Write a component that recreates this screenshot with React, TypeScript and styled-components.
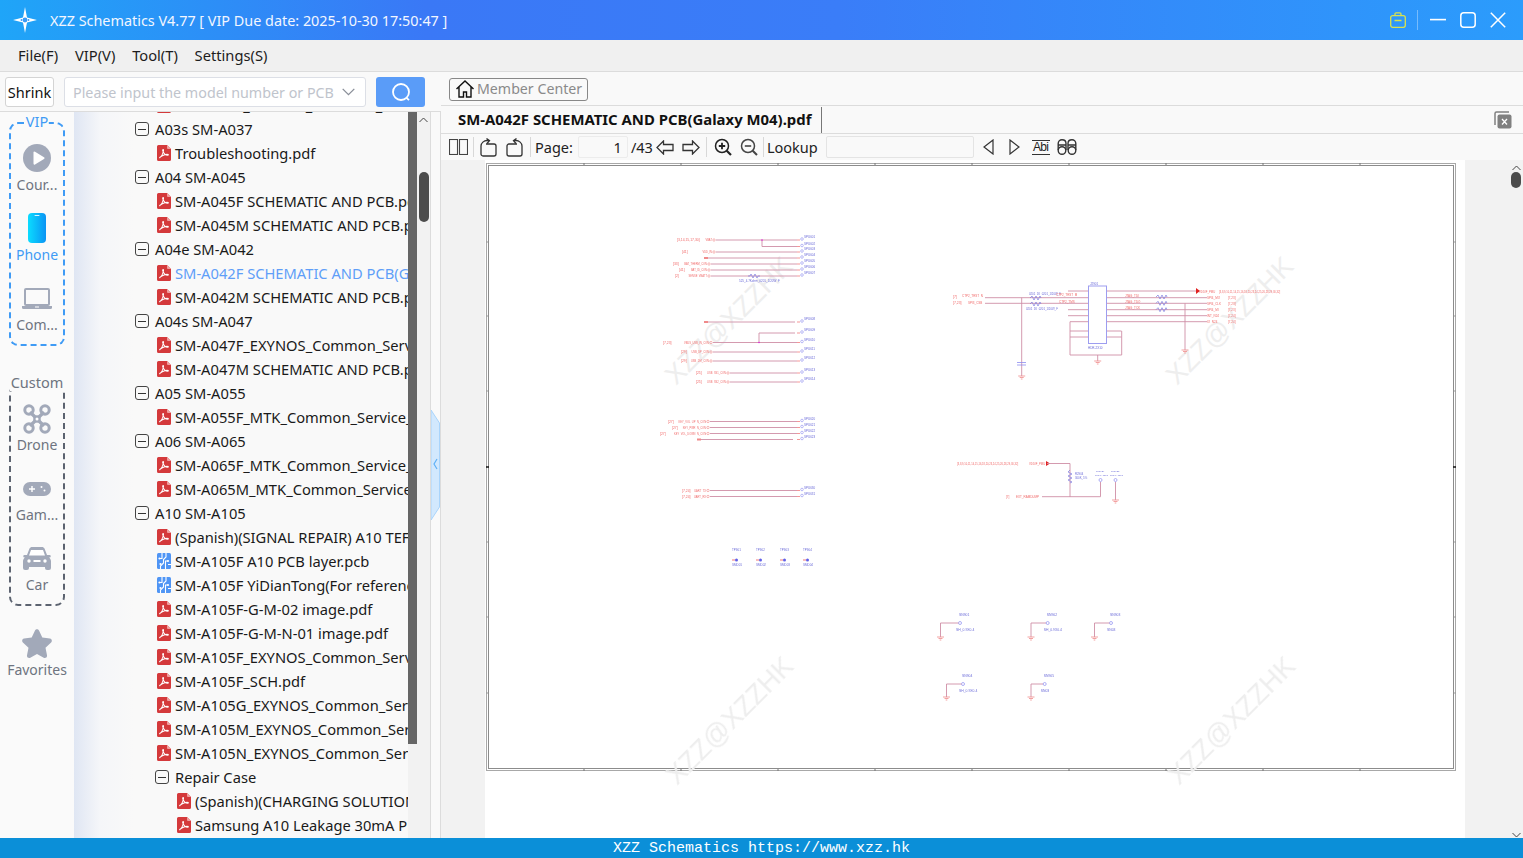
import React from 'react';
import styled, { createGlobalStyle } from 'styled-components';

const GlobalStyle = createGlobalStyle`
  html, body {
    margin: 0;
    padding: 0;
    overflow: hidden;
    font-family: "Noto Sans", "Open Sans", sans-serif;
  }
`;

const ICON_GREY = '#a2a9b9';

const Page = styled.div`
  width: 1523px;
  height: 858px;
  display: flex;
  flex-direction: column;
  overflow: hidden;
  background: #f2f2f2;
`;

const TitleBar = styled.div`
  height: 40px;
  flex: none;
  display: flex;
  align-items: center;
  padding: 0 17px 0 13px;
  color: #fff;
  background: linear-gradient(90deg, #1fa5f8 0, #3a78f6 28%, #3a7df8 55%, #2b9cfc 100%);
`;

const TitleText = styled.span`
  margin-left: 13px;
  font-size: 14.4px;
  flex: 1;
  color: #f2f6ff;
`;

const WindowButton = styled.svg<{ $ml?: number }>`
  display: block;
  margin-left: ${(p) => (p.$ml === undefined ? 14 : p.$ml)}px;
`;

const TitleDivider = styled.div`
  width: 1px;
  height: 20px;
  margin-left: 11px;
  background: rgba(255, 255, 255, 0.35);
`;

const MenuBar = styled.div`
  height: 32px;
  flex: none;
  display: flex;
  align-items: center;
  gap: 16.8px;
  padding: 0 0 1px 18px;
  font-size: 14.7px;
  color: #1c1c1c;
  background: #f0f0f0;
  border-bottom: 1px solid #dcdcdc;
  box-sizing: border-box;
`;

const Main = styled.div`
  flex: 1;
  min-height: 0;
  display: flex;
`;

const LeftPane = styled.div`
  width: 441px;
  flex: none;
  display: flex;
  flex-direction: column;
`;

const SearchRow = styled.div`
  height: 40px;
  flex: none;
  box-sizing: border-box;
  display: flex;
  align-items: flex-start;
  padding: 5px 0 0 5px;
  background: #f9f9f9;
  border-bottom: 1px solid #dcdcdc;
`;

const ShrinkButton = styled.div`
  width: 49px;
  height: 30px;
  box-sizing: border-box;
  border: 1px solid #d4d4d4;
  border-radius: 3px;
  background: #fff;
  font-size: 14.5px;
  line-height: 28px;
  text-align: center;
  color: #111;
`;

const SearchInput = styled.div`
  width: 302px;
  height: 30px;
  margin-left: 10px;
  padding: 0 10px 0 8px;
  box-sizing: border-box;
  display: flex;
  align-items: center;
  justify-content: space-between;
  border: 1px solid #dcdfe6;
  border-radius: 3px;
  background: #fff;
  font-size: 14.3px;
  color: #c0c4cc;
`;

const SearchButton = styled.div`
  width: 49px;
  height: 30px;
  margin-left: 10px;
  display: flex;
  align-items: center;
  justify-content: center;
  border-radius: 3px;
  background: #5a9cf8;
`;

const LeftBody = styled.div`
  flex: 1;
  min-height: 0;
  display: flex;
`;

const Sidebar = styled.div`
  width: 74px;
  flex: none;
  box-sizing: border-box;
  padding: 10px 9px 0;
  display: flex;
  flex-direction: column;
  background: #fafafa;
`;

const Group = styled.div<{ $color: string; $mt?: number; $pt: number; $pb: number; $gap: number }>`
  position: relative;
  width: 56px;
  box-sizing: border-box;
  margin-top: ${(p) => p.$mt || 0}px;
  padding: ${(p) => p.$pt}px 0 ${(p) => p.$pb}px;
  display: flex;
  flex-direction: column;
  align-items: center;
  gap: ${(p) => p.$gap}px;
  border: 2px dashed ${(p) => p.$color};
  border-radius: 9px;
`;

const GroupLabel = styled.span<{ $color: string; $top: number }>`
  position: absolute;
  top: ${(p) => p.$top}px;
  left: 50%;
  transform: translateX(-50%);
  padding: 0 1px;
  background: #fafafa;
  font-size: 14.5px;
  line-height: 18px;
  color: ${(p) => p.$color};
`;

const NavItem = styled.div<{ $active?: boolean; $lh?: number }>`
  display: flex;
  flex-direction: column;
  align-items: center;
  width: 100%;
  font-size: 14px;
  line-height: ${(p) => p.$lh || 22}px;
  white-space: nowrap;
  color: ${(p) => (p.$active ? '#3f9bf5' : '#6e7480')};
`;

const NavIcon = styled.div`
  height: 30px;
  display: flex;
  align-items: center;
  justify-content: center;
`;

const FavoriteWrap = styled.div`
  margin-top: 23px;
`;

const Tree = styled.div`
  width: 334px;
  flex: none;
  overflow: hidden;
  background: linear-gradient(90deg, #dfe6f3 0, #f5f6f9 26px, #f9f9f9 60px);
`;

const TreeList = styled.div`
  margin-top: -19px;
`;

const Row = styled.div<{ $indent: number; $selected?: boolean }>`
  height: 24px;
  display: flex;
  align-items: center;
  padding-left: ${(p) => p.$indent}px;
  font-size: 14.7px;
  white-space: nowrap;
  color: ${(p) => (p.$selected ? '#5f9ef8' : '#1a1a1a')};
`;

const Collapse = styled.span`
  width: 14px;
  height: 14px;
  flex: none;
  box-sizing: border-box;
  margin-right: 6px;
  display: flex;
  align-items: center;
  justify-content: center;
  border: 1px solid #444;
  border-radius: 3px;
  &::before {
    content: '';
    width: 8px;
    height: 1px;
    background: #333;
  }
`;

const FileGlyph = styled.svg`
  flex: none;
  margin-right: 4px;
`;

const DarkBar = styled.div`
  width: 9px;
  height: 632px;
  flex: none;
  background: #666;
`;

const ScrollTrack = styled.div`
  width: 13px;
  flex: none;
  position: relative;
  background: #f2f2f2;
`;

const ScrollArrow = styled.svg<{ $top: number; $left?: number }>`
  position: absolute;
  top: ${(p) => p.$top}px;
  left: ${(p) => (p.$left === undefined ? 2 : p.$left)}px;
`;

const ScrollThumb = styled.div<{ $top: number; $height: number; $left?: number }>`
  position: absolute;
  top: ${(p) => p.$top}px;
  left: ${(p) => (p.$left === undefined ? 2 : p.$left)}px;
  width: 10px;
  height: ${(p) => p.$height}px;
  border-radius: 5px;
  background: #4c4c4c;
`;

const Splitter = styled.div`
  width: 11px;
  flex: none;
  box-sizing: border-box;
  position: relative;
  background: #f9f9f9;
  border-left: 1px solid #dcdcdc;
  border-right: 1px solid #dcdcdc;
`;

const SplitterHandle = styled.svg`
  position: absolute;
  top: 298px;
  left: 0;
`;

const RightPane = styled.div`
  flex: 1;
  min-width: 0;
  display: flex;
  flex-direction: column;
`;

const MemberRow = styled.div`
  height: 34px;
  flex: none;
  box-sizing: border-box;
  padding: 6px 0 0 8px;
  background: #f9f9f9;
  border-bottom: 1px solid #dcdcdc;
`;

const MemberButton = styled.div`
  width: 139px;
  height: 23px;
  box-sizing: border-box;
  display: flex;
  align-items: center;
  gap: 2px;
  padding: 0 0 2px 5px;
  border: 1px solid #888;
  border-radius: 3px;
  font-size: 14.2px;
  color: #8a8a8a;
`;

const TabRow = styled.div`
  height: 28px;
  flex: none;
  box-sizing: border-box;
  display: flex;
  align-items: center;
  padding: 0 11px 0 17px;
  background: #f9f9f9;
  border-bottom: 1px solid #dcdcdc;
`;

const TabTitle = styled.span`
  padding-right: 10px;
  height: 26px;
  line-height: 24px;
  font-size: 14.9px;
  font-weight: 700;
  color: #111;
  border-right: 1px solid #777;
`;

const TabClose = styled.svg`
  margin-left: auto;
`;

const Toolbar = styled.div`
  height: 26px;
  flex: none;
  display: flex;
  align-items: center;
  padding-left: 8px;
  font-size: 14.5px;
  color: #222;
  background: #f9f9f9;
`;

const ToolIcon = styled.svg<{ $ml?: number }>`
  flex: none;
  display: block;
  margin-left: ${(p) => p.$ml || 0}px;
`;

const ToolDivider = styled.div<{ $ml: number }>`
  width: 1px;
  height: 20px;
  flex: none;
  margin-left: ${(p) => p.$ml}px;
  background: #d8d8d8;
`;

const ToolText = styled.span<{ $ml?: number }>`
  flex: none;
  margin-left: ${(p) => p.$ml || 0}px;
`;

const PageInput = styled.div`
  width: 50px;
  height: 22px;
  flex: none;
  box-sizing: border-box;
  margin-left: 5px;
  padding-right: 5px;
  text-align: right;
  line-height: 20px;
  border: 1px solid #ececec;
  border-radius: 2px;
  background: #f9f9f9;
`;

const LookupInput = styled.div`
  width: 148px;
  height: 22px;
  flex: none;
  box-sizing: border-box;
  margin-left: 8px;
  border: 1px solid #e4e4e4;
  border-radius: 2px;
  background: #f9f9f9;
`;

const AbiMark = styled.span`
  flex: none;
  margin-left: 12px;
  width: 18px;
  font-family: "Liberation Sans", sans-serif;
  font-size: 12px;
  letter-spacing: -0.7px;
  line-height: 13px;
  text-align: center;
  color: #222;
  border-top: 1px solid #333;
  border-bottom: 1px solid #333;
`;

const Viewer = styled.div`
  flex: 1;
  min-height: 0;
  position: relative;
  display: flex;
  padding-left: 44px;
  background: #f2f2f2;
`;

const Sheet = styled.div`
  width: 980px;
  height: 100%;
  flex: none;
  background: #fff;
  overflow: hidden;
`;

const SchematicSvg = styled.svg`
  display: block;
  filter: blur(0.35px);
`;

const Footer = styled.div`
  height: 20px;
  flex: none;
  background: #0b8fd8;
  color: #fff;
  text-align: center;
  font-family: "Liberation Mono", monospace;
  font-size: 15px;
  line-height: 22px;
  white-space: pre;
`;

type TreeEntry = { level: number; kind: 'group' | 'pdf' | 'pcb'; text: string; selected?: boolean };

const TREE: TreeEntry[] = [
  { level: 0, kind: 'pdf', text: 'SM-A037F_EXYNOS_Common_Service_Manual.pdf' },
  { level: 0, kind: 'group', text: 'A03s SM-A037' },
  { level: 0, kind: 'pdf', text: 'Troubleshooting.pdf' },
  { level: 0, kind: 'group', text: 'A04 SM-A045' },
  { level: 0, kind: 'pdf', text: 'SM-A045F SCHEMATIC AND PCB.pdf' },
  { level: 0, kind: 'pdf', text: 'SM-A045M SCHEMATIC AND PCB.pdf' },
  { level: 0, kind: 'group', text: 'A04e SM-A042' },
  { level: 0, kind: 'pdf', text: 'SM-A042F SCHEMATIC AND PCB(Galaxy M04).pdf', selected: true },
  { level: 0, kind: 'pdf', text: 'SM-A042M SCHEMATIC AND PCB.pdf' },
  { level: 0, kind: 'group', text: 'A04s SM-A047' },
  { level: 0, kind: 'pdf', text: 'SM-A047F_EXYNOS_Common_Service_Manual.pdf' },
  { level: 0, kind: 'pdf', text: 'SM-A047M SCHEMATIC AND PCB.pdf' },
  { level: 0, kind: 'group', text: 'A05 SM-A055' },
  { level: 0, kind: 'pdf', text: 'SM-A055F_MTK_Common_Service_Manual.pdf' },
  { level: 0, kind: 'group', text: 'A06 SM-A065' },
  { level: 0, kind: 'pdf', text: 'SM-A065F_MTK_Common_Service_Manual.pdf' },
  { level: 0, kind: 'pdf', text: 'SM-A065M_MTK_Common_Service_Manual.pdf' },
  { level: 0, kind: 'group', text: 'A10 SM-A105' },
  { level: 0, kind: 'pdf', text: '(Spanish)(SIGNAL REPAIR) A10 TEF.pdf' },
  { level: 0, kind: 'pcb', text: 'SM-A105F A10 PCB layer.pcb' },
  { level: 0, kind: 'pcb', text: 'SM-A105F YiDianTong(For reference).pcb' },
  { level: 0, kind: 'pdf', text: 'SM-A105F-G-M-02 image.pdf' },
  { level: 0, kind: 'pdf', text: 'SM-A105F-G-M-N-01 image.pdf' },
  { level: 0, kind: 'pdf', text: 'SM-A105F_EXYNOS_Common_Service_Manual.pdf' },
  { level: 0, kind: 'pdf', text: 'SM-A105F_SCH.pdf' },
  { level: 0, kind: 'pdf', text: 'SM-A105G_EXYNOS_Common_Service_Manual.pdf' },
  { level: 0, kind: 'pdf', text: 'SM-A105M_EXYNOS_Common_Service_Manual.pdf' },
  { level: 0, kind: 'pdf', text: 'SM-A105N_EXYNOS_Common_Service_Manual.pdf' },
  { level: 1, kind: 'group', text: 'Repair Case' },
  { level: 1, kind: 'pdf', text: '(Spanish)(CHARGING SOLUTION).pdf' },
  { level: 1, kind: 'pdf', text: 'Samsung A10 Leakage 30mA Problem.pdf' },
];

const PdfIcon = () => (
  <FileGlyph width="14" height="16" viewBox="0 0 14 16">
    <path d="M2 0h8l4 4v10.500a1.500 1.500 0 0 1-1.500 1.500h-11A1.500 1.500 0 0 1 0 14.500v-13A1.500 1.500 0 0 1 1.500 0z" fill="#d4393b" />
    <path d="M10 0l4 4h-3a1 1 0 0 1-1-1z" fill="#f0a0a0" />
    <path d="M2.800 12.600c1.600-1 3-3.600 3.600-6.600.2-1 .1-1.500-.3-1.500s-.5.7-.2 1.600c.7 2 2.600 4 4.800 4.200.7 0 .9-.4.5-.7-1.200-.7-5.300.1-8 2.600-.6.6-.7.8-.4.4z" fill="none" stroke="#fff" strokeWidth="1.100" />
  </FileGlyph>
);

const PcbIcon = () => (
  <FileGlyph width="14" height="16" viewBox="0 0 14 16">
    <rect width="14" height="16" rx="1.500" fill="#4f95f5" />
    <path d="M5 0v5.500H2.500M9 0v4L6.500 6.500V10L3.500 13v3M11 8H8.500V16M14 11.500h-3" fill="none" stroke="#fff" strokeWidth="1.100" />
    <circle cx="2.500" cy="5.500" r="1.100" fill="#fff" />
    <circle cx="11" cy="8" r="1.100" fill="#fff" />
    <circle cx="3.500" cy="11" r="1.100" fill="#fff" />
  </FileGlyph>
);

const TitleBarIcons = () => (
  <>
    <WindowButton width="16" height="16" viewBox="0 0 16 16" fill="none" stroke="#d9e24e" strokeWidth="1.300">
      <rect x="0.700" y="3.700" width="14.600" height="11.600" rx="2" />
      <path d="M5 3.500V2a1.200 1.200 0 0 1 1.200-1.200h3.600A1.200 1.200 0 0 1 11 2v1.500M4.500 8.500h7" />
    </WindowButton>
    <TitleDivider />
    <WindowButton $ml={12} width="16" height="16" viewBox="0 0 16 16" fill="#fff">
      <rect y="6.800" width="16" height="1.600" />
    </WindowButton>
    <WindowButton width="16" height="16" viewBox="0 0 16 16" fill="none" stroke="#fff" strokeWidth="1.500">
      <rect x="0.800" y="0.800" width="14.400" height="14.400" rx="3" />
    </WindowButton>
    <WindowButton width="16" height="16" viewBox="0 0 16 16" fill="none" stroke="#fff" strokeWidth="1.500">
      <path d="M.8.800l14.400 14.400M15.200.800L.8 15.200" />
    </WindowButton>
  </>
);

const Wire = ({ d }: { d: string }) => <path d={d} fill="none" stroke="#cf8ea6" strokeWidth="0.900" />;

const Ground = ({ x, y }: { x: number; y: number }) => (
  <path d={`M${x - 3.500} ${y}h7M${x - 2} ${y + 1.500}h4M${x - 0.800} ${y + 3}h1.600`} stroke="#f08a8a" strokeWidth="0.800" fill="none" />
);

type SchTextProps = { x: number; y: number; children: React.ReactNode; blue?: boolean; size?: number; end?: boolean };

const SchText = ({ x, y, children, blue, size = 3.400, end }: SchTextProps) => (
  <text
    x={x}
    y={y}
    fontSize={size}
    textAnchor={end ? 'end' : 'start'}
    fontFamily="Liberation Sans, sans-serif"
    fill={blue ? '#6a6ad8' : '#f06a6a'}
  >
    {children}
  </text>
);

const TestPoint = ({ x, y, label, sub }: { x: number; y: number; label: string; sub: string }) => (
  <g>
    <circle cx={x} cy={y} r="1.500" fill="none" stroke="#8d8df0" strokeWidth="0.700" />
    <SchText x={x - 1} y={y - 7} blue>{label}</SchText>
    <SchText x={x - 4} y={y + 8} blue>{sub}</SchText>
  </g>
);

// ref sheet, ref x, net name, wire start, y, pin name
const CONNECTOR_ROWS: [string, number, string, number, number, string][] = [
  ['[3,14,15,17,30]', 677, 'VBAT', 716, 240, 'SPU601'],
  ['[41]', 682, 'VDD_IN', 716, 252, 'SPU603'],
  ['[33]', 673, 'BAT_THERM_CON', 711, 264, 'SPU605'],
  ['[41]', 679, 'BAT_ID_CON', 711, 270, 'SPU606'],
  ['[2]', 675, 'SENSE_VBATT', 711, 276, 'SPU607'],
  ['[7,23]', 663, 'VBUS_USB_IN_CON', 713, 342.500, 'SPU610'],
  ['[29]', 681, 'USB_DP_CON', 713, 352, 'SPU611'],
  ['[29]', 681, 'USB_DM_CON', 713, 361, 'SPU612'],
  ['[25]', 696, 'USB_SS1_CON', 730, 373, 'SPU613'],
  ['[25]', 696, 'USB_SS2_CON', 730, 382, 'SPU614'],
  ['[27]', 668, 'KEY_VOL_UP_N_CON', 710, 421.500, 'SPU620'],
  ['[27]', 672, 'KEY_PWR_N_CON', 710, 427.500, 'SPU621'],
  ['[27]', 660, 'KEY_VOL_DOWN_N_CON', 710, 433.500, 'SPU622'],
  ['[7,24]', 682, 'UART_TX', 710, 490.500, 'SPU630'],
  ['[7,24]', 682, 'UART_RX', 710, 496.500, 'SPU631'],
];

// pins that carry no net label of their own
const BARE_PINS: [number, string][] = [
  [246.500, 'SPU602'],
  [258, 'SPU604'],
  [322, 'SPU608'],
  [333, 'SPU609'],
  [439.500, 'SPU623'],
];

const Schematic = () => (
  <SchematicSvg width="980" height="678" viewBox="485 160 980 678">
    {/* page frame with its zone ticks */}
    <rect x="486.500" y="163.500" width="969" height="607" fill="#fff" stroke="#a8a8a8" />
    <rect x="488.500" y="165.500" width="965" height="603" fill="none" stroke="#8c8c8c" />
    {[584, 681, 778, 875, 972, 1069, 1166, 1263, 1360].map((x) => (
      <path key={x} d={`M${x} 163v2M${x} 769v2`} stroke="#777" />
    ))}
    {[242, 316, 391, 542, 617, 693].map((y) => (
      <path key={y} d={`M486 ${y}h2M1454 ${y}h2`} stroke="#999" />
    ))}
    <path d="M486 467h3M1453 467h3" stroke="#111" strokeWidth="1.500" />

    {/* watermarks */}
    {[[728, 320], [1229, 320], [729, 720], [1231, 720]].map(([x, y]) => (
      <text
        key={`${x}-${y}`}
        x={x}
        y={y + 10}
        textAnchor="middle"
        fontSize="27"
        fontFamily="Liberation Sans, sans-serif"
        fill="#eeeeee"
        transform={`rotate(-45 ${x} ${y})`}
      >
        XZZ@XZZHK
      </text>
    ))}

    {/* left connector blocks */}
    {CONNECTOR_ROWS.map(([ref, refX, name, x, y, pin]) => (
      <g key={pin}>
        <Wire d={`M${x} ${y}H797`} />
        <circle cx={x - 2} cy={y} r="1.200" fill="none" stroke="#f08a8a" strokeWidth="0.600" />
        <SchText x={refX} y={y + 1}>{ref}</SchText>
        <SchText x={x - 4} y={y + 1} end size={2.600}>{name}</SchText>
        <circle cx="802" cy={y - 1} r="1.300" fill="none" stroke="#8d8df0" strokeWidth="0.600" />
        <path d={`M797 ${y}h3`} stroke="#f06a6a" strokeWidth="0.700" />
        <SchText x={804} y={y - 2} blue size={3}>{pin}</SchText>
      </g>
    ))}
    {BARE_PINS.map(([y, pin]) => (
      <g key={pin}>
        <circle cx="802" cy={y - 1} r="1.300" fill="none" stroke="#8d8df0" strokeWidth="0.600" />
        <path d={`M797 ${y}h3`} stroke="#f06a6a" strokeWidth="0.700" />
        <SchText x={804} y={y - 2} blue size={3}>{pin}</SchText>
      </g>
    ))}
    <Wire d="M762 240v6.500H797M708 258H797M708 322H795M759 342.500V333H795M701 439.500H793" />
    <circle cx="762" cy="240" r="0.800" fill="#e020e0" />
    <circle cx="759" cy="342.500" r="0.800" fill="#e020e0" />
    <path d="M748 276h2l1-2 2 4 2-4 2 4 1-2h2" fill="none" stroke="#7a7ae0" strokeWidth="0.700" />
    <SchText x={739} y={282} blue size={3}>525_4.7Kohm_0201_1/20W_F</SchText>
    <path d="M704 258h4M704 322h4M697 439.500h4" stroke="#f08a8a" strokeWidth="2" />

    {/* test points under the connectors */}
    {[735, 759, 783, 806].map((x, i) => (
      <g key={x}>
        <SchText x={x - 3} y={551} blue size={3}>{`TP90${i + 1}`}</SchText>
        <path d={`M${x - 3} 560h3`} stroke="#f06a6a" strokeWidth="0.900" />
        <circle cx={x + 1.500} cy="560" r="1.500" fill="#6060e8" />
        <SchText x={x - 3} y={566} blue size={3}>{`SMD0${i + 1}`}</SchText>
      </g>
    ))}

    {/* connector ic block */}
    <rect x="1088.500" y="286" width="18" height="57.500" fill="#fff" stroke="#9d9df0" />
    <Wire d="M985 297.700H1088M985 303.300H1088M1107 291H1196M1107 297.700H1207M1107 303.300H1207M1107 309.700H1207M1107 315.700H1207M1107 321.700H1207" />
    <Wire d="M1068 291h20M1068 309.700h20M1068 315.700h20M1070 321.700h18M1070 331h18M1070 337h18M1107 331h14.500M1107 337h14.500" />
    <Wire d="M1070 321.700V355H1121.700V331M1097.700 355v6M1021.700 297.700V376M1185 303.300V350" />
    <path d="M1196 288l4 3-4 3z" fill="#e02020" />
    <path d="M1017 362.500h9M1017 365h9" stroke="#8d8df0" strokeWidth="0.800" />
    <path d="M1030 298l2-2 2 4 2-4 2 4 2-4 1 2M1030 304l2-2 2 4 2-4 2 4 2-4 1 2M1156 297l2-2 2 4 2-4 2 4 2-4 1 2M1156 303.300l2-2 2 4 2-4 2 4 2-4 1 2M1156 309.700l2-2 2 4 2-4 2 4 2-4 1 2" fill="none" stroke="#7a7ae0" strokeWidth="0.700" />
    <Ground x={1097.700} y={361} />
    <Ground x={1021.700} y={376} />
    <Ground x={1185} y={350} />
    <SchText x={953} y={298}>[7]</SchText>
    <SchText x={962} y={297} size={3}>CTP2_TRST_N</SchText>
    <SchText x={953} y={304}>[7,23]</SchText>
    <SchText x={968} y={304} size={3}>SPI3_CSB</SchText>
    <SchText x={1029} y={295} blue size={2.800}>0201_1K_0201_1/20W_F</SchText>
    <SchText x={1026} y={310} blue size={2.800}>0201_1K_0201_1/20W_F</SchText>
    <SchText x={1056} y={296} size={3}>CTP2_TRST_M</SchText>
    <SchText x={1059} y={303} size={3}>CTP2_TMS</SchText>
    <SchText x={1125} y={297} size={3}>JTAG_TDI</SchText>
    <SchText x={1125} y={303} size={3}>JTAG_TDO</SchText>
    <SchText x={1125} y={309} size={3}>JTAG_TCK</SchText>
    <SchText x={1199} y={293} size={2.800}>VDDIF_PMU</SchText>
    <SchText x={1219} y={293} size={2.600}>[3,8,9,10,11,14,15,16,18,20,23,24,25,26,28,29,30,32]</SchText>
    <SchText x={1207} y={299} size={3}>SPI4_MO</SchText>
    <SchText x={1207} y={305} size={3}>SPI4_CLK</SchText>
    <SchText x={1207} y={311} size={3}>SPI4_MI</SchText>
    <SchText x={1207} y={317} size={3}>INT_N24</SchText>
    <SchText x={1207} y={323} size={3}>IO_N24</SchText>
    <SchText x={1228} y={299} size={3}>[7,23]</SchText>
    <SchText x={1228} y={305} size={3}>[7,23]</SchText>
    <SchText x={1228} y={311} size={3}>[7,23]</SchText>
    <SchText x={1228} y={317} size={3}>[7,24]</SchText>
    <SchText x={1228} y={323} size={3}>[7,24]</SchText>
    <SchText x={1090} y={285} blue size={3}>J2901</SchText>
    <SchText x={1088} y={349} blue size={3}>HDR-2X10</SchText>

    {/* interrupt pullup */}
    <path d="M1046 461l4 2.500-4 2.500z" fill="#e02020" />
    <Wire d="M1047 463.500H1070V497M1042 496.700H1100.500V482M1115.500 482V500" />
    <path d="M1070 470l-2 2 4 2-4 2 4 2-4 2 4 2-2 1" fill="none" stroke="#7a7ae0" strokeWidth="0.700" />
    <circle cx="1100.500" cy="480" r="1.500" fill="none" stroke="#8d8df0" strokeWidth="0.700" />
    <circle cx="1115.500" cy="480" r="1.500" fill="none" stroke="#8d8df0" strokeWidth="0.700" />
    <Ground x={1115.500} y={500} />
    <SchText x={957} y={465} size={2.600}>[3,8,9,10,11,14,15,16,18,20,23,24,25,26,28,29,30,32]</SchText>
    <SchText x={1029} y={465} size={2.800}>VDDIF_PMU</SchText>
    <SchText x={1006} y={498} size={3}>[7]</SchText>
    <SchText x={1016} y={498} size={3}>EXT_RAMDUMP</SchText>
    <SchText x={1075} y={475} blue size={2.800}>R2904</SchText>
    <SchText x={1075} y={479} blue size={2.800}>300K_5%</SchText>
    <SchText x={1096} y={472} blue size={2.400}>TP2924</SchText>
    <SchText x={1095} y={475.500} blue size={2.400}>TP3.0_0201</SchText>
    <SchText x={1111} y={472} blue size={2.400}>TP2925</SchText>
    <SchText x={1110} y={475.500} blue size={2.400}>TP3.0_0201</SchText>

    {/* shield clips */}
    <TestPoint x={960} y={623} label="SN901" sub="SH_0.9X0.4" />
    <TestPoint x={1047.700} y={623} label="SN902" sub="SH_0.9X0.4" />
    <TestPoint x={1111} y={623} label="SN903" sub="SN03" />
    <TestPoint x={963} y={684} label="SN904" sub="SH_0.9X0.4" />
    <TestPoint x={1044.700} y={684} label="SN905" sub="SN03" />
    <Wire d="M958.500 623H940.500V637M1046 623H1031V637M1109.500 623H1094.500V637M961.500 684H946.500V697M1043 684H1031V697" />
    <Ground x={940.500} y={637} />
    <Ground x={1031} y={637} />
    <Ground x={1094.500} y={637} />
    <Ground x={946.500} y={697} />
    <Ground x={1031} y={697} />
  </SchematicSvg>
);

export default function App() {
  return (
    <Page>
      <GlobalStyle />
      <TitleBar>
        <svg width="24" height="26" viewBox="0 0 24 26">
          <path d="M12 0l2 10.500L24 13l-10 2.500L12 26l-2-10.500L0 13l10-2.500z" fill="#fff" />
          <circle cx="12" cy="13" r="2.400" fill="#3a9bf6" />
          <circle cx="8.500" cy="13" r="0.900" fill="#3a9bf6" />
          <circle cx="15.500" cy="13" r="0.900" fill="#3a9bf6" />
        </svg>
        <TitleText>XZZ Schematics V4.77 [ VIP Due date: 2025-10-30 17:50:47 ]</TitleText>
        <TitleBarIcons />
      </TitleBar>

      <MenuBar>
        <span>File(F)</span>
        <span>VIP(V)</span>
        <span>Tool(T)</span>
        <span>Settings(S)</span>
      </MenuBar>

      <Main>
        <LeftPane>
          <SearchRow>
            <ShrinkButton>Shrink</ShrinkButton>
            <SearchInput>
              <span>Please input the model number or PCB</span>
              <svg width="13" height="8" viewBox="0 0 13 8" fill="none" stroke="#8a8f99" strokeWidth="1.300">
                <path d="M.7.900l5.800 5.800L12.300.900" />
              </svg>
            </SearchInput>
            <SearchButton>
              <svg width="20" height="20" viewBox="0 0 20 20" fill="none" stroke="#fff" strokeWidth="1.800">
                <circle cx="10" cy="10" r="8" />
                <path d="M15.500 15.800l2.500 2.400" />
              </svg>
            </SearchButton>
          </SearchRow>

          <LeftBody>
            <Sidebar>
              <Group $color="#3f9bf5" $pt={19} $pb={7} $gap={16}>
                <GroupLabel $color="#3f9bf5" $top={-12}>VIP</GroupLabel>
                <NavItem $lh={24}>
                  <NavIcon>
                    <svg width="28" height="28" viewBox="0 0 28 28">
                      <circle cx="14" cy="14" r="14" fill={ICON_GREY} />
                      <path d="M10.500 8.500a1 1 0 0 1 1.500-.8l9 5.500a1 1 0 0 1 0 1.700l-9 5.500a1 1 0 0 1-1.500-.8z" fill="#fff" />
                    </svg>
                  </NavIcon>
                  Cour...
                </NavItem>
                <NavItem $active $lh={24}>
                  <NavIcon>
                    <svg width="18" height="30" viewBox="0 0 18 30">
                      <defs>
                        <linearGradient id="phoneFill" x1="0" x2="1" y1="0" y2="0">
                          <stop offset="0" stopColor="#0bdcff" />
                          <stop offset="1" stopColor="#0a94f4" />
                        </linearGradient>
                      </defs>
                      <rect width="18" height="30" rx="4" fill="url(#phoneFill)" />
                      <rect x="6.500" y="2" width="5" height="1" rx="0.500" fill="#d8f6ff" />
                    </svg>
                  </NavIcon>
                  Phone
                </NavItem>
                <NavItem $lh={24}>
                  <NavIcon>
                    <svg width="30" height="21" viewBox="0 0 30 21">
                      <rect x="3" y="1" width="24" height="16" rx="1" fill="none" stroke={ICON_GREY} strokeWidth="2" />
                      <path d="M0 18h30v1.500a1.500 1.500 0 0 1-1.500 1.500h-27A1.500 1.500 0 0 1 0 19.500z" fill={ICON_GREY} />
                      <rect x="13" y="18.500" width="4" height="1" fill="#fff" />
                    </svg>
                  </NavIcon>
                  Com...
                </NavItem>
              </Group>

              <Group $color="#5c6370" $mt={38} $pt={18} $pb={8} $gap={18}>
                <GroupLabel $color="#6e7480" $top={-13}>Custom</GroupLabel>
                <NavItem>
                  <NavIcon>
                    <svg width="28" height="30" viewBox="0 0 28 30">
                      <g fill="none" stroke={ICON_GREY}>
                        <path d="M7 8l14 14M21 8L7 22" strokeWidth="3.200" />
                        <circle cx="6" cy="6" r="4.200" strokeWidth="3" />
                        <circle cx="22" cy="6" r="4.200" strokeWidth="3" />
                        <circle cx="6" cy="24" r="4.200" strokeWidth="3" />
                        <circle cx="22" cy="24" r="4.200" strokeWidth="3" />
                      </g>
                      <circle cx="14" cy="15" r="3.800" fill={ICON_GREY} />
                      <circle cx="14" cy="15" r="1.500" fill="#fff" />
                    </svg>
                  </NavIcon>
                  Drone
                </NavItem>
                <NavItem>
                  <NavIcon>
                    <svg width="28" height="14" viewBox="0 0 28 14">
                      <rect width="28" height="14" rx="7" fill={ICON_GREY} />
                      <path d="M6 7h6M9 4v6" stroke="#fff" strokeWidth="1.400" />
                      <circle cx="18.500" cy="5" r="1" fill="#fff" />
                      <circle cx="21.500" cy="8.500" r="1" fill="#fff" />
                    </svg>
                  </NavIcon>
                  Gam...
                </NavItem>
                <NavItem>
                  <NavIcon>
                    <svg width="28" height="24" viewBox="0 0 28 24">
                      <path
                        d="M6.500 1.500C7 .6 8 0 9 0h10c1 0 2 .6 2.500 1.500L24 8h2.500a1 1 0 0 1 0 2.500H26c1.300 1 2 2.300 2 3.800V21a2 2 0 0 1-2 2h-2a2 2 0 0 1-2-2v-1H6v1a2 2 0 0 1-2 2H2a2 2 0 0 1-2-2v-6.700c0-1.500.7-2.800 2-3.800h-.5a1 1 0 0 1 0-2.500H4z"
                        fill={ICON_GREY}
                      />
                      <path d="M8 3h12l2 5.500H6z" fill="#fff" />
                      <circle cx="6" cy="14" r="1.700" fill="#fff" />
                      <circle cx="22" cy="14" r="1.700" fill="#fff" />
                      <rect x="10.500" y="13" width="7" height="2" fill="#fff" />
                    </svg>
                  </NavIcon>
                  Car
                </NavItem>
              </Group>

              <FavoriteWrap>
                <NavItem>
                  <NavIcon>
                    <svg width="30" height="30" viewBox="0 0 30 30">
                      <path
                        d="M13 1.500c.8-1.700 3.200-1.700 4 0l3.300 7 7.600 1c1.900.3 2.600 2.600 1.200 3.900l-5.600 5.300 1.500 7.600c.3 1.900-1.600 3.300-3.300 2.400L15 25l-6.700 3.700c-1.700.9-3.600-.5-3.300-2.400l1.500-7.600-5.600-5.300C-.5 12.100.2 9.800 2.100 9.500l7.600-1z"
                        fill={ICON_GREY}
                      />
                    </svg>
                  </NavIcon>
                  Favorites
                </NavItem>
              </FavoriteWrap>
            </Sidebar>

            <Tree>
              <TreeList>
                {TREE.map((item, i) => (
                  <Row
                    key={i}
                    $indent={61 + item.level * 20 + (item.kind === 'group' ? 0 : 22)}
                    $selected={item.selected}
                  >
                    {item.kind === 'group' && <Collapse />}
                    {item.kind === 'pdf' && <PdfIcon />}
                    {item.kind === 'pcb' && <PcbIcon />}
                    {item.text}
                  </Row>
                ))}
              </TreeList>
            </Tree>
            <DarkBar />
            <ScrollTrack>
              <ScrollArrow $top={5} width="9" height="6" viewBox="0 0 9 6" fill="none" stroke="#444">
                <path d="M.5 5L4.500 1l4 4" />
              </ScrollArrow>
              <ScrollThumb $top={60} $height={50} />
            </ScrollTrack>
            <Splitter>
              <SplitterHandle width="9" height="110" viewBox="0 0 9 110">
                <path d="M0 0l8.500 13v84L0 110z" fill="#d2e8fd" stroke="#a9d4fb" />
                <path d="M6 49l-3 5 3 5" fill="none" stroke="#5fb0f7" strokeWidth="1.200" />
              </SplitterHandle>
            </Splitter>
          </LeftBody>
        </LeftPane>

        <RightPane>
          <MemberRow>
            <MemberButton>
              <svg width="20" height="20" viewBox="0 0 20 20" fill="none" stroke="#111" strokeWidth="1.400">
                <path d="M1.500 10L10 2l8.500 8M4 8v10h4.500v-5h3v5H16V8" />
              </svg>
              Member Center
            </MemberButton>
          </MemberRow>

          <TabRow>
            <TabTitle>SM-A042F SCHEMATIC AND PCB(Galaxy M04).pdf</TabTitle>
            <TabClose width="18" height="18" viewBox="0 0 18 18">
              <path d="M1 14V2.500A1.500 1.500 0 0 1 2.500 1H15" fill="none" stroke="#808080" strokeWidth="1.500" />
              <rect x="3.500" y="3.500" width="14" height="14" rx="2" fill="#808080" />
              <path d="M8 8l5 5.500M13 8l-5 5.500" stroke="#fff" strokeWidth="1.300" />
            </TabClose>
          </TabRow>

          <Toolbar>
            <ToolIcon width="19" height="16" viewBox="0 0 19 16" fill="none" stroke="#444" strokeWidth="1.100">
              <rect x="0.500" y="0.500" width="8" height="15" />
              <rect x="10.500" y="0.500" width="8" height="15" />
            </ToolIcon>
            <ToolDivider $ml={5} />
            <ToolIcon $ml={6} width="18" height="19" viewBox="0 0 18 19" fill="none" stroke="#333" strokeWidth="1.300">
              <path d="M6 6h8a2 2 0 0 1 2 2v8a2 2 0 0 1-2 2H3a2 2 0 0 1-2-2V8" />
              <path d="M1 8c0-3 3-5.500 6-5.500h2M6.500.5L9.500 2.700 7 5.500" />
            </ToolIcon>
            <ToolIcon $ml={7} width="18" height="19" viewBox="0 0 18 19" fill="none" stroke="#333" strokeWidth="1.300">
              <path d="M12 6H4a2 2 0 0 0-2 2v8a2 2 0 0 0 2 2h11a2 2 0 0 0 2-2V8" />
              <path d="M17 8c0-3-3-5.500-6-5.500H9M11.500.5L8.500 2.700 11 5.500" />
            </ToolIcon>
            <ToolDivider $ml={7} />
            <ToolText $ml={4}>Page:</ToolText>
            <PageInput>1</PageInput>
            <ToolText $ml={3}>/43</ToolText>
            <ToolIcon $ml={3} width="18" height="15" viewBox="0 0 18 15" fill="none" stroke="#333" strokeWidth="1.300">
              <path d="M7.500 1L1 7.500 7.500 14v-3.500h9.500v-6H7.500z" />
            </ToolIcon>
            <ToolIcon $ml={8} width="18" height="15" viewBox="0 0 18 15" fill="none" stroke="#333" strokeWidth="1.300">
              <path d="M10.500 1L17 7.500 10.500 14v-3.500H1v-6h9.500z" />
            </ToolIcon>
            <ToolDivider $ml={6} />
            <ToolIcon $ml={7} width="18" height="18" viewBox="0 0 18 18" fill="none" stroke="#222" strokeWidth="1.500">
              <circle cx="8" cy="8" r="6.500" />
              <path d="M12.700 12.700L17 17" strokeWidth="2.200" />
              <path d="M4.800 8h6.400M8 4.800v6.400" strokeWidth="1.800" />
            </ToolIcon>
            <ToolIcon $ml={8} width="18" height="18" viewBox="0 0 18 18" fill="none" stroke="#444" strokeWidth="1.500">
              <circle cx="8" cy="8" r="6.500" />
              <path d="M12.700 12.700L17 17" strokeWidth="2" />
              <path d="M4.800 8h6.400" strokeWidth="1.600" />
            </ToolIcon>
            <ToolDivider $ml={5} />
            <ToolText $ml={3}>Lookup</ToolText>
            <LookupInput />
            <ToolIcon $ml={9} width="11" height="16" viewBox="0 0 11 16" fill="none" stroke="#333" strokeWidth="1.200">
              <path d="M10 1v14L1 8z" />
            </ToolIcon>
            <ToolIcon $ml={15} width="11" height="16" viewBox="0 0 11 16" fill="none" stroke="#333" strokeWidth="1.200">
              <path d="M1 1v14l9-7z" />
            </ToolIcon>
            <AbiMark>Abi</AbiMark>
            <ToolIcon $ml={7} width="20" height="16" viewBox="0 0 20 16" fill="none" stroke="#333" strokeWidth="1.400">
              <circle cx="5" cy="11.500" r="3.800" />
              <circle cx="15" cy="11.500" r="3.800" />
              <path d="M1.200 11V4.500C1.200 2 3 .8 5 .8s4 1 4 3.700V11M18.800 11V4.500C18.800 2 17 .8 15 .8s-4 1-4 3.700V11M1.200 6H9M11 6h7.800" />
            </ToolIcon>
          </Toolbar>

          <Viewer>
            <Sheet>
              <Schematic />
            </Sheet>
            <ScrollArrow $top={5} $left={1071} width="9" height="6" viewBox="0 0 9 6" fill="none" stroke="#444">
              <path d="M.5 5L4.500 1l4 4" />
            </ScrollArrow>
            <ScrollThumb $top={12} $height={16} $left={1070} />
            <ScrollArrow $top={672} $left={1071} width="9" height="6" viewBox="0 0 9 6" fill="none" stroke="#444">
              <path d="M.5 1l4 4 4-4" />
            </ScrollArrow>
          </Viewer>
        </RightPane>
      </Main>

      <Footer>XZZ Schematics https://www.xzz.hk</Footer>
    </Page>
  );
}
